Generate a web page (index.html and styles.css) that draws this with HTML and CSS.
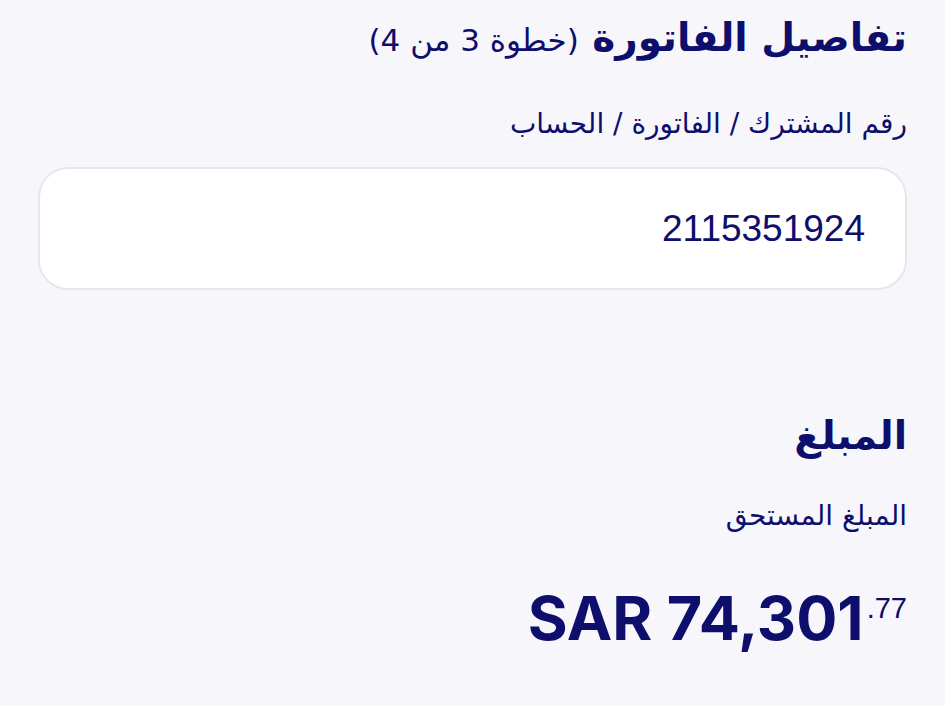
FILE: index.html
```html
<!DOCTYPE html>
<html lang="ar" dir="rtl">
<head>
    <meta charset="UTF-8">
    <meta name="viewport" content="width=device-width, initial-scale=1.0">
    <title>تفاصيل الفاتورة</title>
    <link rel="stylesheet" href="styles.css">
</head>
<body>
    <div class="page">
        <section class="bill">
            <h2 class="title">تفاصيل الفاتورة <span class="step">(خطوة 3 من 4)</span></h2>
            <label class="label" for="account">رقم المشترك / الفاتورة / الحساب</label>
            <div class="field">
                <input type="text" id="account" value="2115351924" dir="ltr">
            </div>
        </section>

        <section class="amount">
            <h2 class="title">المبلغ</h2>
            <div class="label">المبلغ المستحق</div>
            <div class="total" dir="ltr">SAR 74,301<sup>.77</sup></div>
        </section>
    </div>
</body>
</html>
```

FILE: styles.css
```css
body {
    margin: 0;
    background-color: #f7f7fb;
    color: #0e0e6c;
    font-family: "DejaVu Sans", sans-serif;
}
.page {
    padding: 8px 38px 0 38px;
}
.title {
    margin: 0;
    font-size: 39px;
    font-weight: bold;
    line-height: 60px;
}
.step {
    font-size: 31px;
    font-weight: normal;
}
.label {
    display: block;
    margin-top: 34px;
    font-size: 28px;
    line-height: 40px;
}
.field {
    margin-top: 23px;
    background: white;
    border: 2px solid #e6e6ec;
    border-radius: 30px;
    height: 119px;
    display: flex;
    align-items: center;
    padding: 0 40px;
}
.field input {
    width: 100%;
    border: none;
    outline: none;
    background: transparent;
    text-align: right;
    color: #0e0e6c;
    font-family: "Liberation Sans", sans-serif;
    font-size: 37px;
    padding: 0;
}
.amount {
    margin-top: 116px;
}
.amount .label {
    margin-top: 30px;
}
.total {
    margin-top: 37px;
    text-align: right;
    font-family: "Inter", sans-serif;
    font-size: 61px;
    font-weight: bold;
    line-height: 70px;
}
.total sup {
    font-family: "Liberation Sans", sans-serif;
    font-size: 29px;
    font-weight: normal;
    vertical-align: 22px;
    margin-left: 3px;
}
```
